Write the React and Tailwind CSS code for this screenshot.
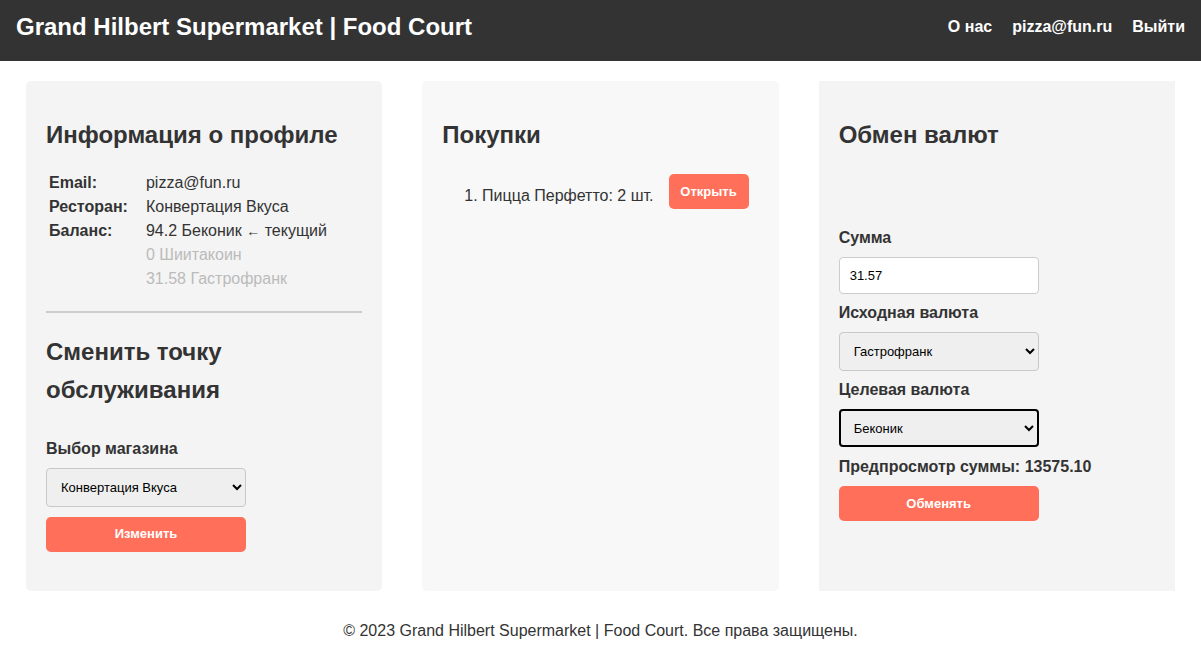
import React from "react";

const F = { fontFamily: '"Liberation Sans", Arial, sans-serif' };

export default function App() {
  return (
    <div className="min-h-[647px] bg-white text-[#333]" style={F}>
      <header className="h-[61px] bg-[#333] px-4 pb-[7px] flex items-center justify-between text-white">
        <h1 className="text-[24px] font-bold leading-[28px]">Grand Hilbert Supermarket | Food Court</h1>
        <nav className="flex items-center gap-[20px] text-[16px] font-bold leading-[20px]">
          <a>О нас</a>
          <a>pizza@fun.ru</a>
          <a>Выйти</a>
        </nav>
      </header>

      <main className="grid grid-cols-3 gap-[40px] px-[26px] pt-[20px]">
        {/* Profile card */}
        <section className="h-[510px] rounded-[5px] bg-[#f4f4f4] px-[20px] pt-[40px]">
          <h2 className="text-[24px] font-bold leading-[28px]">Информация о профиле</h2>
          <table className="mt-[21px] border-separate border-spacing-[2px] text-[16px] leading-[20px]">
            <tbody>
              <tr>
                <td className="p-px font-bold align-top">Email:</td>
                <td className="p-px pl-[4px]">pizza@fun.ru</td>
              </tr>
              <tr>
                <td className="p-px font-bold align-top pr-[12px]">Ресторан:</td>
                <td className="p-px pl-[4px]">Конвертация Вкуса</td>
              </tr>
              <tr>
                <td className="p-px font-bold align-top">Баланс:</td>
                <td className="p-px pl-[4px]">
                  94.2 Беконик <span className="text-[14px]">←</span> текущий
                </td>
              </tr>
              <tr>
                <td className="p-px"></td>
                <td className="p-px pl-[4px] text-[#bbb]">0 Шиитакоин</td>
              </tr>
              <tr>
                <td className="p-px"></td>
                <td className="p-px pl-[4px] text-[#bbb]">31.58 Гастрофранк</td>
              </tr>
            </tbody>
          </table>
          <div className="mt-[19px] border-t-2 border-[#ccc]"></div>
          <h2 className="mt-[19.5px] text-[24px] font-bold leading-[38px]">
            Сменить точку
            <br />
            обслуживания
          </h2>
          <label className="block mt-[30px] text-[16px] font-bold leading-[20px]">Выбор магазина</label>
          <select
            defaultValue="a"
            className="mt-[9px] block h-[39px] w-[200px] rounded-[4px] border border-[#c8c8c8] bg-[#efefef] px-[10px] text-[13px] text-black"
          >
            <option value="a">Конвертация Вкуса</option>
          </select>
          <button className="mt-[10px] block h-[35px] w-[200px] rounded-[5px] bg-[#ff6f59] text-[13px] font-bold text-white">
            Изменить
          </button>
        </section>

        {/* Purchases card */}
        <section className="h-[510px] rounded-[5px] bg-[#f8f8f8] px-[20px] pt-[40px]">
          <h2 className="text-[24px] font-bold leading-[28px]">Покупки</h2>
          <div className="mt-[25px] flex items-start pl-[22px]">
            <span className="mt-[12px] text-[16px] leading-[20px]">1. Пицца Перфетто: 2 шт.</span>
            <button className="ml-[15px] h-[35px] w-[80px] rounded-[5px] bg-[#ff6f59] text-[13px] font-bold text-white">
              Открыть
            </button>
          </div>
        </section>

        {/* Exchange card */}
        <section className="h-[510px] bg-[#f4f4f4] px-[20px] pt-[40px]">
          <h2 className="text-[24px] font-bold leading-[28px]">Обмен валют</h2>
          <label className="block mt-[79px] text-[16px] font-bold leading-[20px]">Сумма</label>
          <input
            defaultValue="31.57"
            className="mt-[9px] block h-[37px] w-[200px] rounded-[4px] border border-[#ccc] bg-white px-[10px] text-[13px] text-black outline-none"
          />
          <label className="block mt-[9px] text-[16px] font-bold leading-[20px]">Исходная валюта</label>
          <select
            defaultValue="g"
            className="mt-[9px] block h-[39px] w-[200px] rounded-[4px] border border-[#c8c8c8] bg-[#efefef] px-[10px] text-[13px] text-black"
          >
            <option value="g">Гастрофранк</option>
          </select>
          <label className="block mt-[9px] text-[16px] font-bold leading-[20px]">Целевая валюта</label>
          <select
            defaultValue="b"
            className="mt-[9px] block h-[38px] w-[200px] rounded-[4px] border-2 border-black bg-[#efefef] px-[9px] text-[13px] text-black"
          >
            <option value="b">Беконик</option>
          </select>
          <p className="mt-[10px] text-[16px] font-bold leading-[20px]">Предпросмотр суммы: 13575.10</p>
          <button className="mt-[9px] block h-[35px] w-[200px] rounded-[5px] bg-[#ff6f59] text-[13px] font-bold text-white">
            Обменять
          </button>
        </section>
      </main>

      <footer className="pt-[31px] text-center text-[16px] leading-[18px]">
        © 2023 Grand Hilbert Supermarket | Food Court. Все права защищены.
      </footer>
    </div>
  );
}
